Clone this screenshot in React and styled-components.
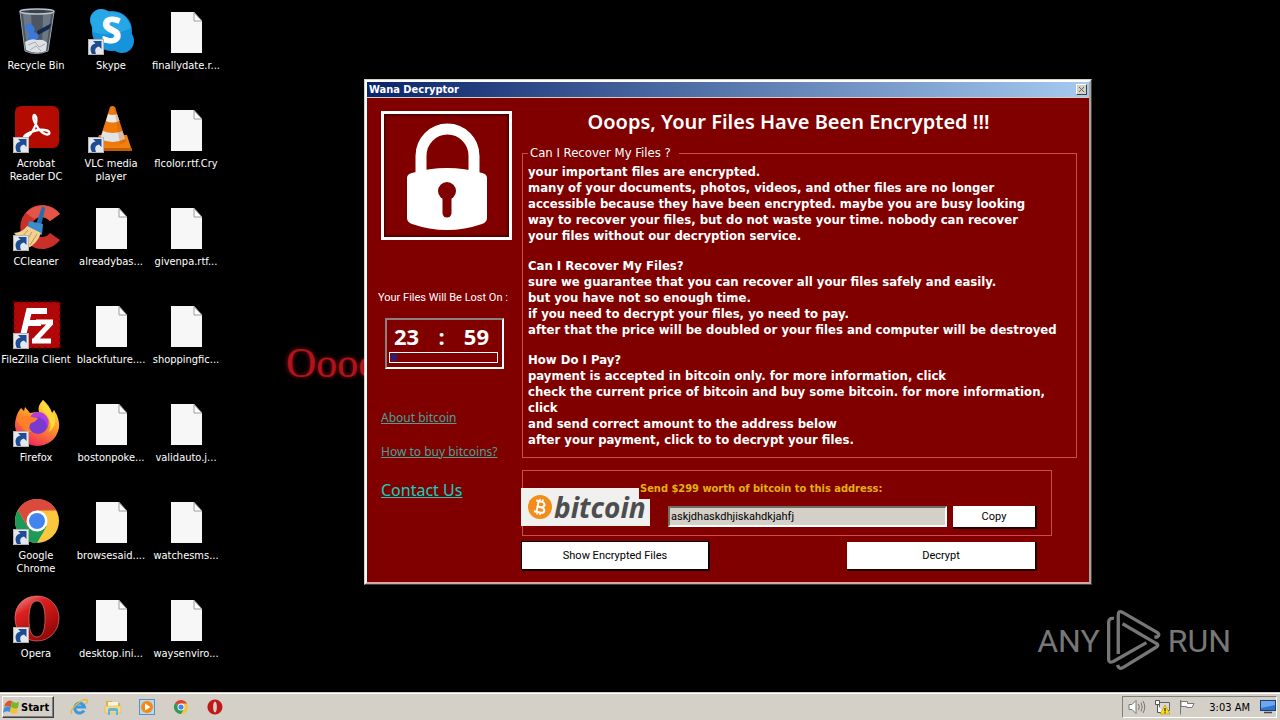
import React from 'react';
import styled, { createGlobalStyle, css } from 'styled-components';

const tahoma = '"DejaVu Sans Condensed", "DejaVu Sans", sans-serif';
const ui = 'Roboto, "Liberation Sans", sans-serif';
const maroon = '#800000';
const face = '#d4d0c8';
const rule = '#cf4a4a';

const GlobalStyle = createGlobalStyle`
  * { box-sizing: border-box; }
  body { margin: 0; background: #000; font-family: ${tahoma}; }
  button, input { font: inherit; color: inherit; }
`;

const Screen = styled.div`
  display: flex;
  flex-direction: column;
  height: 100vh;
  overflow: hidden;
  background: #000;
`;

const Desktop = styled.main`
  position: relative;
  flex: 1;
  min-height: 0;
`;

const Shortcuts = styled.nav`
  display: grid;
  grid-auto-flow: column;
  grid-template-rows: repeat(7, 98px);
  grid-auto-columns: 75px;
  justify-content: start;
  padding-top: 8px;
`;

const Shortcut = styled.button`
  display: flex;
  flex-direction: column;
  align-items: center;
  gap: 3px;
  width: 72px;
  padding: 0;
  border: 0;
  background: none;
  color: #fff;
  font-size: 11px;
  line-height: 13px;
  text-align: center;
  svg { flex: none; }
`;

const ShortcutLabel = styled.span`
  white-space: pre;
`;

const Wallpaper = styled.p`
  position: absolute;
  left: 286px;
  top: 339px;
  margin: 0;
  color: #b0141c;
  font: 42px/48px "Liberation Serif", serif;
  text-shadow: 0 0 4px #a00810;
`;

const Watermark = styled.div`
  position: absolute;
  right: 49px;
  bottom: 19px;
  display: flex;
  align-items: center;
  gap: 5px;
  color: #777;
  font: 400 32px/40px Roboto, sans-serif;
`;

const Dialog = styled.section`
  position: absolute;
  left: 364px;
  top: 79px;
  width: 728px;
  border: 1px solid;
  border-color: ${face} #404040 #404040 ${face};
  background: ${maroon};
  color: #fff;
`;

const DialogInner = styled.div`
  border: 2px solid;
  border-color: #fff #a8a4a0 #d8a8a8 #fff;
`;

const TitleBar = styled.header`
  display: flex;
  align-items: center;
  justify-content: space-between;
  height: 16px;
  padding: 0 2px;
  border-bottom: 1px solid ${face};
  background: linear-gradient(90deg, #0a246a, #a6caf0);
  font-weight: 700;
  font-size: 11px;
`;

const CloseButton = styled.button`
  display: grid;
  place-items: center;
  width: 11px;
  height: 11px;
  padding: 0;
  border: 1px solid;
  border-color: #fff #404040 #404040 #fff;
  background: ${face};
`;

const DialogBody = styled.div`
  display: grid;
  grid-template-columns: 144px 1fr;
  padding: 11px 12px 13px 11px;
`;

const Side = styled.aside`
  display: flex;
  flex-direction: column;
  align-items: flex-start;
  padding-top: 2px;
`;

const LockFrame = styled.div`
  width: 131px;
  height: 129px;
  margin: 0 0 51px 3px;
  border: 3px solid #fff;
  box-shadow: inset 0 0 3px 1px #300;
`;

const LostLabel = styled.span`
  font: 11px/14px ${ui};
`;

const Timer = styled.div`
  width: 119px;
  margin: 13px 0 40px 7px;
  padding: 3px 4px 4px 2px;
  border: 2px solid;
  border-color: #8a8080 #fff #fff #8a8080;
`;

const Digits = styled.div`
  display: flex;
  justify-content: space-between;
  padding: 0 9px 3px 5px;
  font: 700 22px/26px "Noto Sans", sans-serif;
`;

const Track = styled.div`
  height: 11px;
  padding: 1px;
  border: 1px solid #fff;
  &::before {
    content: "";
    display: block;
    width: 6px;
    height: 7px;
    background: #2c1c74;
  }
`;

const SideLink = styled.a`
  margin: 0 0 16px 3px;
  font: ${(p) => (p.$large ? '16px/26px' : '12px/18px')} "Noto Sans", sans-serif;
  color: ${(p) => (p.$large ? '#10d0c0' : '#48a098')};
`;

const Main = styled.div`
  min-width: 0;
`;

const Heading = styled.h1`
  margin: 0 22px 10px 0;
  font: 600 20px/26px "Noto Sans", sans-serif;
  text-align: center;
`;

const Notice = styled.fieldset`
  min-width: 0;
  margin: 0;
  padding: 3px 5px 9px;
  border: 1px solid ${rule};
`;

const Legend = styled.legend`
  padding: 0 8px 0 2px;
  font-size: 13px;
  line-height: 16px;
`;

const Paragraph = styled.p`
  margin: 0;
  font-weight: 700;
  font-size: 13px;
  line-height: 16px;
  white-space: nowrap;
  & + & { margin-top: 14px; }
`;

const Payment = styled.section`
  display: flex;
  align-items: flex-start;
  height: 66px;
  margin: 12px 25px 6px 0;
  border: 1px solid ${rule};
`;

const BitcoinLogo = styled.div`
  display: flex;
  align-items: center;
  gap: 2px;
  flex: none;
  width: 129px;
  height: 38px;
  margin: 17px 0 0 -2px;
  padding-left: 7px;
  background: #f0f0ee;
  color: #4d4d4f;
  font: italic 700 28px/34px "Noto Sans", sans-serif;
`;

const PayForm = styled.div`
  flex: 1;
  padding: 8px 16px 0 0;
`;

const PayLabel = styled.label`
  position: relative;
  display: block;
  width: 260px;
  margin-left: -11px;
  padding-left: 1px;
  background: ${maroon};
  color: #e0b010;
  font-size: 11px;
  line-height: 20px;
  font-weight: 700;
`;

const PayRow = styled.div`
  display: flex;
  gap: 6px;
  margin: 7px 0 0 18px;
`;

const Address = styled.input`
  flex: 1;
  min-width: 0;
  height: 21px;
  padding: 0 1px;
  border: 2px solid;
  border-color: #707068 #fff #fff #707068;
  background: ${face};
  color: #000;
  font: 11px/16px ${ui};
`;

const flat = css`
  border: 0;
  border-radius: 0;
  background: #fff;
  color: #000;
  font: 11px/16px ${ui};
  box-shadow: 1px 1px 0 1px #200000;
`;

const ActionButton = styled.button`
  ${flat}
  width: ${(p) => p.$width};
  height: ${(p) => (p.$small ? '21px' : '27px')};
  padding: 0;
  ${(p) => p.$default && css`outline: 1px solid #000;`}
`;

const Actions = styled.div`
  display: flex;
  justify-content: space-between;
  margin-right: 42px;
`;

const Taskbar = styled.footer`
  display: flex;
  align-items: center;
  height: 28px;
  padding: 1px 3px 0 2px;
  border-top: 1px solid ${face};
  background: ${face};
  box-shadow: inset 0 1px 0 #fff;
  color: #000;
`;

const StartButton = styled.button`
  display: flex;
  align-items: center;
  gap: 1px;
  height: 22px;
  width: 52px;
  margin-right: 14px;
  padding: 0;
  border: 1px solid;
  border-color: #fff #404040 #404040 #fff;
  box-shadow: inset -1px -1px 0 #808080;
  background: ${face};
  font-weight: 700;
  font-size: 11px;
`;

const QuickLaunch = styled.div`
  display: flex;
  gap: 12px;
`;

const QuickButton = styled.button`
  display: grid;
  place-items: center;
  width: 22px;
  height: 22px;
  padding: 0;
  border: 0;
  background: none;
`;

const Tray = styled.div`
  display: flex;
  align-items: center;
  gap: 8px;
  height: 22px;
  margin-left: auto;
  padding: 0 0 0 5px;
  border: 1px solid;
  border-color: #808080 #fff #fff #808080;
  font-size: 11px;
`;

const Clock = styled.time`
  margin: 0 2px 0 6px;
`;

const Arrow = () => (
  <g>
    <rect x="1.5" y="31.5" width="15" height="15" fill="#e4e8ee" stroke="#b8b4ac" />
    <path d="M5 46C2 41 4 36 8.500 35.500L6 33H14.500V41L12 38.500C8 39.500 7.500 42 9 46Z" fill="#1d4c94" />
  </g>
);

const icons = {
  bin: (
    <g>
      <path d="M8 3L13 43Q24 48 36 43L42 3Z" fill="#4b5661" />
      <path d="M11 6L15 41H21L19 6Z" fill="#7e8b98" opacity=".65" />
      <path d="M31 6L30 40L34 42L39 6Z" fill="#8996a2" opacity=".55" />
      <path d="M13 20Q14 13 20 17Q24 20 22 24L26 26Q28 32 22 32L15 33L17 26Z" fill="#3c78d8" />
      <path d="M25 23L40 15L37 21L26 27Z" fill="#14294e" />
      <path d="M13 34Q19 30 25 32Q32 31 35 35L34 43Q24 47 14 42Z" fill="#dde1e4" />
      <path d="M16 37L23 34L27 39L33 36M18 42L24 38L29 43" fill="none" stroke="#a5abb0" />
      <ellipse cx="25" cy="3.500" rx="17" ry="2.500" fill="#39424b" stroke="#b9c3cb" strokeWidth="1.500" />
      <path d="M8 4L13 43Q24 48 36 43L42 4" fill="none" stroke="#9aa5ae" />
    </g>
  ),
  skype: (
    <g>
      <g fill="#1593dc">
        <circle cx="25" cy="23" r="20" />
        <circle cx="14" cy="12" r="11" />
        <circle cx="35" cy="33" r="12" />
      </g>
      <path d="M4 16Q1 5 13 1Q19 1 23 4Q39 3 44 20Q24 30 6 24Z" fill="#35b4ee" opacity=".6" />
      <text x="24.500" y="35" textAnchor="middle" fontFamily="Noto Sans, sans-serif" fontWeight="700" fontSize="36" fill="#fff" stroke="#fff">S</text>
      <Arrow />
    </g>
  ),
  file: (
    <g>
      <path d="M9 4H32L40 13V45H9Z" fill="#f7f7f7" />
      <path d="M32 4.500V13H40L32 4.500" fill="#fff" stroke="#9c9c9c" />
    </g>
  ),
  acrobat: (
    <g>
      <rect x="3" y="0" width="44" height="42" rx="6" fill="#b30b00" />
      <path d="M14 31C20 29 26 17 24 11C22 6 20 11 23 17C27 25 33 30 37 28C39 25 33 23 26 24C20 25 11 29 12 32C13 33 16 30 18 27" fill="none" stroke="#fff" strokeWidth="2.400" strokeLinecap="round" />
      <Arrow />
    </g>
  ),
  vlc: (
    <g>
      <path d="M12 29H40L45 45H6Z" fill="#f08010" />
      <path d="M6 42H45V45H6Z" fill="#c55c05" />
      <path d="M23 1Q25-1 28 1L39 36Q26 44 12 36Z" fill="#ee7a0c" />
      <path d="M21 8Q25 10 30 8L32.500 15Q25 18 19 15Z" fill="#e8eaec" />
      <path d="M16 25Q26 29 35.500 25L38 33Q26 39 13 33Z" fill="#e1e4e6" />
      <path d="M28 1L39 36L33 38L27 1Z" fill="#c75808" opacity=".3" />
      <Arrow />
    </g>
  ),
  ccleaner: (
    <g>
      <path d="M48 10A22 22 0 1 0 48 36L38 29A10 10 0 1 1 38 17Z" fill="#c9302a" />
      <path d="M48 10A22 22 0 0 0 14 9L22 15Q30 10 38 17Z" fill="#e35548" />
      <path d="M30 3Q33 2 33 5L29 22L24 20Z" fill="#1d6fb4" />
      <path d="M17 17L31 20L30 31L15 25Z" fill="#3a8ccb" />
      <path d="M15 22L29 29Q25 40 16 44L2 29Q11 28 15 22Z" fill="#f3d291" />
      <path d="M16 26L9 34M20 28L14 38M25 30L18 41" stroke="#c7934a" />
      <Arrow />
    </g>
  ),
  filezilla: (
    <g>
      <rect x="2" y="0" width="46" height="46" fill="#b00808" />
      <rect x="1.500" y="-.5" width="47" height="47" fill="none" stroke="#400" strokeWidth="2" strokeDasharray="3 3" />
      <g fill="none" stroke="#fff" strokeWidth="6">
        <path d="M35 9H17L10 38M15 21H29" />
        <path d="M24 20H41M39 21L23 38M20 39H39" strokeWidth="5" />
      </g>
      <Arrow />
    </g>
  ),
  firefox: (
    <g>
      <defs>
        <linearGradient id="ff" x1=".8" y1="0" x2=".3" y2="1">
          <stop offset="0" stopColor="#fff04a" />
          <stop offset=".45" stopColor="#ff9a26" />
          <stop offset="1" stopColor="#f02060" />
        </linearGradient>
      </defs>
      <path d="M31 0Q38 6 40 13L42 10Q48 19 47 28Q43 45 25 46Q5 44 3 26Q3 15 9 8L12 11L13 7L18 13Q24 12 27 12Q25 6 31 0Z" fill="url(#ff)" />
      <circle cx="26" cy="24" r="10" fill="#7a3ad0" />
      <path d="M18 17Q22 10 31 13Q40 19 35 28Q35 19 26 17Z" fill="#b13ce0" />
      <path d="M4 20Q10 14 20 17L26 18Q24 22 19 23Q15 28 20 32Q12 32 9 26Z" fill="#ff8028" />
      <path d="M31 0Q27 8 34 14Q41 22 37 32Q45 26 43 17Q38 11 31 0Z" fill="#ffd83c" />
      <Arrow />
    </g>
  ),
  chrome: (
    <g>
      <circle cx="25" cy="23" r="22" fill="#fbc73e" />
      <path d="M25 23L6 12A22 22 0 0 1 44.500 12.500H25Z" fill="#dc4a3d" />
      <path d="M6 12A22 22 0 0 0 25 45L34.500 28.500L25 23L15.500 28.500Z" fill="#1c9a57" />
      <path d="M6 12L15.500 28.500L25 23V12.500Z" fill="#dc4a3d" />
      <circle cx="25" cy="23" r="10.500" fill="#fff" />
      <circle cx="25" cy="23" r="8" fill="#4285f0" />
      <Arrow />
    </g>
  ),
  opera: (
    <g>
      <defs>
        <linearGradient id="op" x1="0" y1="0" x2=".6" y2="1">
          <stop offset="0" stopColor="#f0a09a" />
          <stop offset=".35" stopColor="#dc2020" />
          <stop offset="1" stopColor="#960606" />
        </linearGradient>
      </defs>
      <path fillRule="evenodd" d="M25 0C38 0 47 10 47 22S38 45 25 45S3 35 3 22S12 0 25 0ZM25 5C19 5 17 13 17 23S19 41 25 41S33 33 33 23S31 5 25 5Z" fill="url(#op)" stroke="#e88" strokeWidth=".6" />
      <Arrow />
    </g>
  ),
};

const shortcuts = [
  ['bin', 'Recycle Bin'], ['acrobat', 'Acrobat\nReader DC'], ['ccleaner', 'CCleaner'], ['filezilla', 'FileZilla Client'],
  ['firefox', 'Firefox'], ['chrome', 'Google\nChrome'], ['opera', 'Opera'],
  ['skype', 'Skype'], ['vlc', 'VLC media\nplayer'], ['file', 'alreadybas...'], ['file', 'blackfuture....'],
  ['file', 'bostonpoke...'], ['file', 'browsesaid....'], ['file', 'desktop.ini...'],
  ['file', 'finallydate.r...'], ['file', 'flcolor.rtf.Cry'], ['file', 'givenpa.rtf...'], ['file', 'shoppingfic...'],
  ['file', 'validauto.j...'], ['file', 'watchesms...'], ['file', 'waysenviro...'],
];

const Lock = () => (
  <svg width="125" height="123" viewBox="0 0 125 123" aria-hidden="true">
    <path d="M37 64V42A26.500 27 0 0 1 90 42V64" fill="none" stroke="#fff" strokeWidth="11" />
    <path d="M23 64Q23 60 28 59Q63 49 98 59Q103 60 103 64V104Q103 108 98 110Q63 122 28 110Q23 108 23 104Z" fill="#fff" />
    <circle cx="63" cy="77" r="9" fill={maroon} />
    <path d="M63 77V99" stroke={maroon} strokeWidth="9" strokeLinecap="round" />
  </svg>
);

const PlayMark = () => (
  <svg width="58" height="65" viewBox="265 25 175 195" fill="none" stroke="#777" strokeWidth="10" aria-hidden="true">
    <path d="M305 163V45Q305 32 317 37L422 98Q433 106 422 112L414 112" />
    <path d="M292 56Q276 53 276 68V180Q277 192 290 186L390 129" />
    <path d="M318 72L419 131Q430 137 419 143L318 205Q306 210 303 196" />
  </svg>
);

const Coin = () => (
  <svg width="24" height="24" viewBox="0 0 24 24" aria-hidden="true">
    <circle cx="12" cy="12" r="12" fill="#f28c1a" />
    <g transform="rotate(12 12 12)" fill="none" stroke="#fff" strokeWidth="2">
      <path d="M7 6.500H13Q16 7 16 9.200T13 12H9.500M13 12Q17 12.500 17 15T13 17.500H7M9.500 6.500V17.500" />
      <path d="M10.500 4V7M13.500 4V7M10.500 17V20M13.500 17V20" strokeWidth="1.500" />
    </g>
  </svg>
);

const Flag = () => (
  <svg width="17" height="16" viewBox="0 0 17 16" aria-hidden="true">
    <path d="M2 5Q5 0 9 2L8 8Q4 6 1 8Z" fill="#e0552c" />
    <path d="M9 2Q12 5 16 3L15 9Q11 11 8 8Z" fill="#76b82a" />
    <path d="M1 9Q4 6 8 8L7 13Q3 11 0 14Z" fill="#3f8fd8" />
    <path d="M8 8Q11 11 15 9L14 14Q10 16 7 13Z" fill="#f5c22c" />
  </svg>
);

const small = {
  'Internet Explorer': (
    <g fill="none">
      <path d="M14 12.500A5 5 0 1 1 14.500 9H5" stroke="#3a9ade" strokeWidth="3" />
      <path d="M2 16Q-1 13 6 7Q14 0 17 2Q18 3 16 6" stroke="#e6b93a" strokeWidth="1.500" />
    </g>
  ),
  'Windows Explorer': (
    <g>
      <path d="M2 3H8L9 5H16V15H2Z" fill="#d9b344" />
      <path d="M4 4H14V9H4Z" fill="#f8f4dc" />
      <path d="M1 8H17V15H1Z" fill="#f4dc86" stroke="#d9b85a" strokeWidth=".6" />
      <path d="M4 17V12Q4 10 6 10H12Q14 10 14 12V17H12V13H6V17Z" fill="#62b4dc" />
    </g>
  ),
  'Media Player': (
    <g>
      <rect x="1.500" y="1.500" width="15" height="15" fill="#b8d8f2" stroke="#5a90c4" />
      <circle cx="9" cy="9" r="6" fill="#f28a14" />
      <path d="M7 5.500L12.500 9L7 12.500Z" fill="#fff" />
    </g>
  ),
  Chrome: (
    <g>
      <circle cx="9" cy="9" r="7" fill="#f5c43c" />
      <path d="M9 9L2.900 5.500A7 7 0 0 1 15 5.500H9Z" fill="#d8453a" />
      <path d="M2.900 5.500A7 7 0 0 0 9 16L12 10.700L9 9Z" fill="#2a9c58" />
      <circle cx="9" cy="9" r="3.500" fill="#fff" />
      <circle cx="9" cy="9" r="2.600" fill="#4285f0" />
    </g>
  ),
  Opera: (
    <path fillRule="evenodd" d="M9 1.500A7.500 7.500 0 1 1 8.900 1.500ZM9 3.500C6.500 3.500 6.500 14.500 9 14.500S11.500 3.500 9 3.500Z" fill="#c01818" />
  ),
};

const Speaker = () => (
  <svg width="18" height="16" viewBox="0 0 18 16" fill="none" stroke="#777" aria-hidden="true">
    <path d="M1 5.500H4L8 1.500V14.500L4 10.500H1Z" fill="#fff" />
    <path d="M10.500 5Q12 8 10.500 11M13 3.500Q15.500 8 13 12.500M15 2Q18.500 8 15 14" />
  </svg>
);

const Network = () => (
  <svg width="17" height="16" viewBox="0 0 17 16" aria-hidden="true">
    <path d="M5.500 3.500H15.500V11.500H5.500Z" fill="#d8d8d8" stroke="#666" />
    <path d="M1.500 1.500H5.500V5.500H1.500ZM3.500 6V13.500H10" fill="#fff" stroke="#555" />
    <path d="M11 6L16 15H6Z" fill="#ffdc20" stroke="#b09000" strokeWidth=".6" />
    <path d="M11 9V12.500M11 13.300V14.300" stroke="#000" />
  </svg>
);

const ActionFlag = () => (
  <svg width="16" height="16" viewBox="0 0 16 16" fill="#fff" stroke="#777" aria-hidden="true">
    <path d="M1.500 1V15.500M2 2.500H8.500V4.500H15L13 8.500H7.500V7.500H2Z" />
  </svg>
);

const Monitor = () => (
  <svg width="16" height="14" viewBox="0 0 16 14" aria-hidden="true">
    <rect x=".5" y=".5" width="15" height="10" fill="#2f74cf" stroke="#1c3f7c" />
    <path d="M1 1H15V5L1 8Z" fill="#6fa8ea" />
    <path d="M4 12.500H12" stroke="#444" strokeWidth="1.500" />
  </svg>
);

export default function App() {
  return (
    <Screen>
      <GlobalStyle />
      <Desktop>
        <Shortcuts aria-label="Desktop">
          {shortcuts.map(([icon, label]) => (
            <Shortcut key={label} type="button">
              <svg width="48" height="48" viewBox="0 0 48 48" overflow="visible" aria-hidden="true">{icons[icon]}</svg>
              <ShortcutLabel>{label}</ShortcutLabel>
            </Shortcut>
          ))}
        </Shortcuts>
        <Wallpaper>Oooo</Wallpaper>
        <Watermark>
          <span>ANY</span>
          <PlayMark />
          <span>RUN</span>
        </Watermark>
        <Dialog aria-label="Wana Decryptor">
          <DialogInner>
            <TitleBar>
              <span>Wana Decryptor</span>
              <CloseButton type="button" aria-label="Close">
                <svg width="7" height="7" viewBox="0 0 7 7" aria-hidden="true"><path d="M1 1L6 6M6 1L1 6" stroke="#666" /></svg>
              </CloseButton>
            </TitleBar>
            <DialogBody>
              <Side>
                <LockFrame><Lock /></LockFrame>
                <LostLabel>Your Files Will Be Lost On :</LostLabel>
                <Timer>
                  <Digits><span>23</span><span>:</span><span>59</span></Digits>
                  <Track />
                </Timer>
                <SideLink href="#about">About bitcoin</SideLink>
                <SideLink href="#buy">How to buy bitcoins?</SideLink>
                <SideLink href="#contact" $large>Contact Us</SideLink>
              </Side>
              <Main>
                <Heading>Ooops, Your Files Have Been Encrypted !!!</Heading>
                <Notice>
                  <Legend>Can I Recover My Files ?</Legend>
                  <Paragraph>
                    your important files are encrypted.<br />
                    many of your documents, photos, videos, and other files are no longer<br />
                    accessible because they have been encrypted. maybe you are busy looking<br />
                    way to recover your files, but do not waste your time. nobody can recover<br />
                    your files without our decryption service.
                  </Paragraph>
                  <Paragraph>
                    Can I Recover My Files?<br />
                    sure we guarantee that you can recover all your files safely and easily.<br />
                    but you have not so enough time.<br />
                    if you need to decrypt your files, yo need to pay.<br />
                    after that the price will be doubled or your files and computer will be destroyed
                  </Paragraph>
                  <Paragraph>
                    How Do I Pay?<br />
                    payment is accepted in bitcoin only. for more information, click<br />
                    check the current price of bitcoin and buy some bitcoin. for more information,<br />
                    click<br />
                    and send correct amount to the address below<br />
                    after your payment, click to to decrypt your files.
                  </Paragraph>
                </Notice>
                <Payment>
                  <BitcoinLogo><Coin />bitcoin</BitcoinLogo>
                  <PayForm>
                    <PayLabel htmlFor="address">Send $299 worth of bitcoin to this address:</PayLabel>
                    <PayRow>
                      <Address id="address" readOnly value="askjdhaskdhjiskahdkjahfj" />
                      <ActionButton type="button" $width="82px" $small>Copy</ActionButton>
                    </PayRow>
                  </PayForm>
                </Payment>
                <Actions>
                  <ActionButton type="button" $width="186px" $default>Show Encrypted Files</ActionButton>
                  <ActionButton type="button" $width="188px">Decrypt</ActionButton>
                </Actions>
              </Main>
            </DialogBody>
          </DialogInner>
        </Dialog>
      </Desktop>
      <Taskbar>
        <StartButton type="button"><Flag />Start</StartButton>
        <QuickLaunch>
          {Object.entries(small).map(([name, art]) => (
            <QuickButton key={name} type="button" aria-label={name}>
              <svg width="18" height="18" viewBox="0 0 18 18">{art}</svg>
            </QuickButton>
          ))}
        </QuickLaunch>
        <Tray>
          <Speaker />
          <Network />
          <ActionFlag />
          <Clock>3:03 AM</Clock>
          <Monitor />
        </Tray>
      </Taskbar>
    </Screen>
  );
}
